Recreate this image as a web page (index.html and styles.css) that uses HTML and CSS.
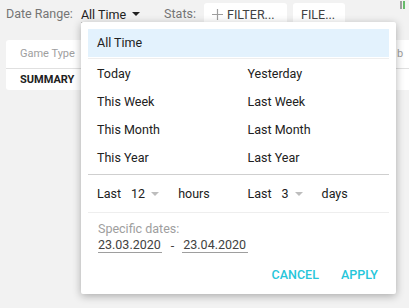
FILE: index.html
```html
<!DOCTYPE html>
<html lang="en">
<head>
    <meta charset="UTF-8">
    <meta name="viewport" content="width=device-width, initial-scale=1.0">
    <title>Stats - Date Range</title>
    <link rel="stylesheet" href="styles.css">
</head>
<body>

<!-- Toolbar -->
<div class="toolbar">
    <span class="label">Date Range:</span>
    <span class="range-value">All Time</span>
    <span class="caret"></span>
    <span class="label stats-label">Stats:</span>
    <button class="tool-btn filter-btn">
        <svg width="11" height="11" viewBox="0 0 11 11"><path d="M5.5 0v11M0 5.5h11" stroke="#9e9e9e" stroke-width="1.2"/></svg>
        FILTER...
    </button>
    <button class="tool-btn file-btn">FILE...</button>
    <span class="mini-chart"><i></i><i></i></span>
</div>

<!-- Stats table -->
<div class="card">
    <div class="card-row head">
        <div class="cell">Game Type</div>
        <div class="cell">b</div>
    </div>
    <div class="card-row">
        <div class="cell strong">SUMMARY</div>
        <div class="cell"></div>
    </div>
</div>

<!-- Date range popup -->
<div class="popup">
    <div class="opt-all">All Time</div>
    <div class="presets">
        <div class="opt">Today</div>
        <div class="opt">Yesterday</div>
        <div class="opt">This Week</div>
        <div class="opt">Last Week</div>
        <div class="opt">This Month</div>
        <div class="opt">Last Month</div>
        <div class="opt">This Year</div>
        <div class="opt">Last Year</div>
    </div>

    <div class="last-row">
        <div class="last-group">
            <span>Last</span>
            <span class="select">12<span class="select-caret"></span></span>
            <span>hours</span>
        </div>
        <div class="last-group">
            <span>Last</span>
            <span class="select">3<span class="select-caret"></span></span>
            <span>days</span>
        </div>
    </div>

    <div class="specific">
        <div class="specific-label">Specific dates:</div>
        <div class="dates">
            <span class="date-input">23.03.2020</span>
            <span class="dash">-</span>
            <span class="date-input">23.04.2020</span>
        </div>
    </div>

    <div class="actions">
        <button class="flat-btn">CANCEL</button>
        <button class="flat-btn">APPLY</button>
    </div>
</div>

</body>
</html>
```

FILE: styles.css
```css
body {
    margin: 0;
    padding: 0;
    font-family: Roboto, 'Liberation Sans', sans-serif;
    font-size: 12.5px;
    color: #212121;
    background: #f2f2f2;
    overflow: hidden;
    height: 308px;
    position: relative;
}

/* Toolbar */
.toolbar {
    display: flex;
    align-items: center;
    padding: 3px 0 3px 6px;
    height: 22px;
}

.label {
    color: #757575;
    line-height: 22px;
}

.range-value {
    margin-left: 8px;
    line-height: 15px;
    border-bottom: 1px solid #9e9e9e;
    margin-top: 1px;
}

.caret {
    margin-left: 6px;
    width: 0;
    height: 0;
    border-left: 4px solid transparent;
    border-right: 4px solid transparent;
    border-top: 4px solid #212121;
}

.stats-label {
    margin-left: 24px;
}

.tool-btn {
    display: flex;
    align-items: center;
    gap: 4px;
    height: 22px;
    margin-left: 8px;
    padding: 0 0 0 8px;
    border: none;
    border-radius: 3px;
    background: #fff;
    font-family: inherit;
    font-size: 12.5px;
    color: #424242;
}

.filter-btn {
    width: 83px;
}

.file-btn {
    width: 52px;
    margin-left: 6px;
}

.mini-chart {
    margin-left: auto;
    margin-right: 4px;
    align-self: flex-start;
    display: flex;
    gap: 1px;
    margin-top: -2px;
}

.mini-chart i {
    width: 2px;
    height: 8px;
    background: #9e9e9e;
}

.mini-chart i + i {
    background: #66bb6a;
}

/* Card */
.card {
    margin: 12px 0 0 6px;
    width: 420px;
    background: #fff;
    border-radius: 3px;
    font-size: 11px;
}

.card-row {
    display: grid;
    grid-template-columns: 377px 1fr;
}

.card-row.head {
    height: 28px;
    border-bottom: 1px solid #e0e0e0;
    color: #9e9e9e;
}

.card-row.head .cell {
    line-height: 28px;
}

.cell {
    padding-left: 14px;
    line-height: 21px;
}

.cell.strong {
    font-weight: 700;
    color: #212121;
}

/* Popup */
.popup {
    position: absolute;
    left: 81px;
    top: 22px;
    width: 315px;
    height: 272px;
    box-sizing: border-box;
    padding: 7px 7px 0;
    background: #fff;
    border-radius: 2px;
    box-shadow: 0 2px 8px rgba(0, 0, 0, 0.3);
}

.opt-all {
    height: 28px;
    line-height: 28px;
    padding-left: 9px;
    background: #e3f2fd;
    border-bottom: 1px solid #fff;
    box-shadow: 0 1px 0 #eeeeee;
}

.presets {
    display: grid;
    grid-template-columns: 1fr 1fr;
    grid-auto-rows: 28px;
    padding: 2px 0 2px;
    border-bottom: 1px solid #cfcfcf;
}

.opt {
    line-height: 28px;
    padding-left: 9px;
}

.last-row {
    display: grid;
    grid-template-columns: 1fr 1fr;
    height: 37px;
    border-bottom: 1px solid #eeeeee;
}

.last-group {
    display: flex;
    align-items: center;
    padding-left: 9px;
}

.select {
    display: flex;
    align-items: center;
    margin-left: 10px;
    margin-right: 19px;
}

.select-caret {
    margin-left: 6px;
    width: 0;
    height: 0;
    border-left: 4px solid transparent;
    border-right: 4px solid transparent;
    border-top: 4px solid #bdbdbd;
}

.specific {
    padding: 8px 0 0 10px;
}

.specific-label {
    color: #9e9e9e;
    line-height: 16px;
}

.dates {
    display: flex;
    align-items: flex-end;
    line-height: 15px;
    color: #424242;
}

.date-input {
    border-bottom: 1px solid #9e9e9e;
    padding: 0 1px 0 0;
}

.date-input + .dash + .date-input {
    padding: 0 2px 0 1px;
}

.dash {
    margin: 0 8px 0 9px;
}

.actions {
    display: flex;
    justify-content: flex-end;
    gap: 22px;
    margin-top: 15px;
    padding-right: 11px;
}

.flat-btn {
    border: none;
    background: none;
    padding: 0;
    font-family: inherit;
    font-size: 12.5px;
    font-weight: 500;
    line-height: 14px;
    color: #26c6da;
}
```
